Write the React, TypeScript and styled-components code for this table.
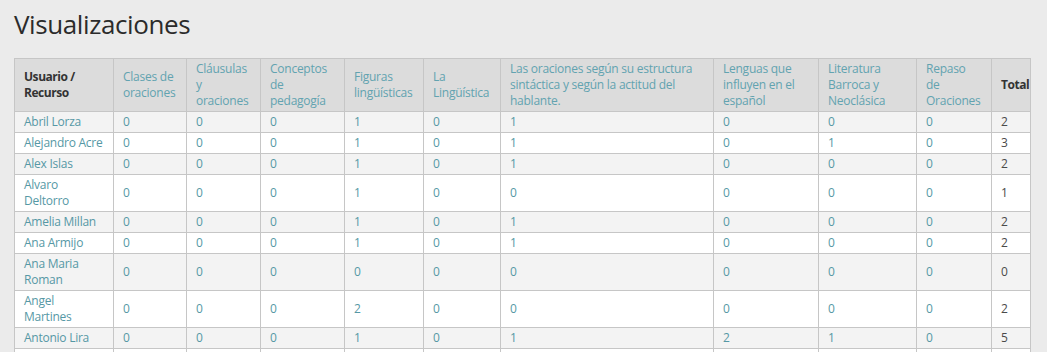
import React from "react";
import styled, { createGlobalStyle } from "styled-components";

const GlobalStyle = createGlobalStyle`
  body {
    margin: 0;
    background: #ebebeb;
    font-family: "Open Sans", "Liberation Sans", sans-serif;
    color: #333;
  }
`;

const Page = styled.div`
  padding: 0 14px;
`;

const Title = styled.h1`
  margin: 9px 0 18px;
  font-size: 26px;
  line-height: 31px;
  font-weight: 400;
  color: #2b2b2b;
  letter-spacing: -0.4px;
`;

const Table = styled.table`
  border-collapse: collapse;
  table-layout: fixed;
  width: 1017px;
  font-size: 12px;
  line-height: 16px;
  letter-spacing: -0.25px;
  background: #fff;
`;

const HeadCell = styled.th<{ $strong?: boolean; $tight?: boolean }>`
  background: #dcdcdc;
  border: 1px solid #c6c6c6;
  padding: 2px ${(p) => (p.$tight ? "0" : "10px")} 2px 9px;
  text-align: left;
  vertical-align: middle;
  font-weight: ${(p) => (p.$strong ? 700 : 400)};
  letter-spacing: ${(p) => (p.$strong ? "-0.45px" : "-0.25px")};
  color: ${(p) => (p.$strong ? "#333" : "#62a3b0")};
`;

const Row = styled.tr`
  &:nth-child(odd) td {
    background: #f3f3f3;
  }
`;

const Cell = styled.td<{ $total?: boolean }>`
  border: 1px solid #c6c6c6;
  padding: 2px ${(p) => (p.$total ? "1px" : "10px")} 2px 9px;
  vertical-align: middle;
  color: ${(p) => (p.$total ? "#4a4a4a" : "#5698a5")};
  background: #fff;
`;

const columns = [
  { title: "Usuario / Recurso", width: 99, strong: true },
  { title: "Clases de oraciones", width: 73 },
  { title: "Cláusulas y oraciones", width: 74 },
  { title: "Conceptos de pedagogía", width: 84 },
  { title: "Figuras lingüísticas", width: 79 },
  { title: "La Lingüística", width: 77 },
  {
    title: "Las oraciones según su estructura sintáctica y según la actitud del hablante.",
    width: 213,
  },
  { title: "Lenguas que influyen en el español", width: 105 },
  { title: "Literatura Barroca y Neoclásica", width: 98 },
  { title: "Repaso de Oraciones", width: 75 },
  { title: "Total", width: 39, strong: true, tight: true },
];

const rows: [string, number[]][] = [
  ["Abril Lorza", [0, 0, 0, 1, 0, 1, 0, 0, 0, 2]],
  ["Alejandro Acre", [0, 0, 0, 1, 0, 1, 0, 1, 0, 3]],
  ["Alex Islas", [0, 0, 0, 1, 0, 1, 0, 0, 0, 2]],
  ["Alvaro Deltorro", [0, 0, 0, 1, 0, 0, 0, 0, 0, 1]],
  ["Amelia Millan", [0, 0, 0, 1, 0, 1, 0, 0, 0, 2]],
  ["Ana Armijo", [0, 0, 0, 1, 0, 1, 0, 0, 0, 2]],
  ["Ana Maria Roman", [0, 0, 0, 0, 0, 0, 0, 0, 0, 0]],
  ["Angel Martines", [0, 0, 0, 2, 0, 0, 0, 0, 0, 2]],
  ["Antonio Lira", [0, 0, 0, 1, 0, 1, 2, 1, 0, 5]],
  ["Arturo Campos", [0, 0, 0, 1, 0, 1, 0, 0, 0, 2]],
];

const App = () => {
  return (
    <Page>
      <GlobalStyle />
      <Title>Visualizaciones</Title>
      <Table>
        <colgroup>
          {columns.map((c) => (
            <col key={c.title} style={{ width: c.width }} />
          ))}
        </colgroup>
        <thead>
          <tr>
            {columns.map((c) => (
              <HeadCell key={c.title} $strong={c.strong} $tight={c.tight}>
                {c.title}
              </HeadCell>
            ))}
          </tr>
        </thead>
        <tbody>
          {rows.map(([name, values]) => (
            <Row key={name}>
              <Cell>{name}</Cell>
              {values.map((v, i) => (
                <Cell key={i} $total={i === values.length - 1}>
                  {v}
                </Cell>
              ))}
            </Row>
          ))}
        </tbody>
      </Table>
    </Page>
  );
};

export default App;
